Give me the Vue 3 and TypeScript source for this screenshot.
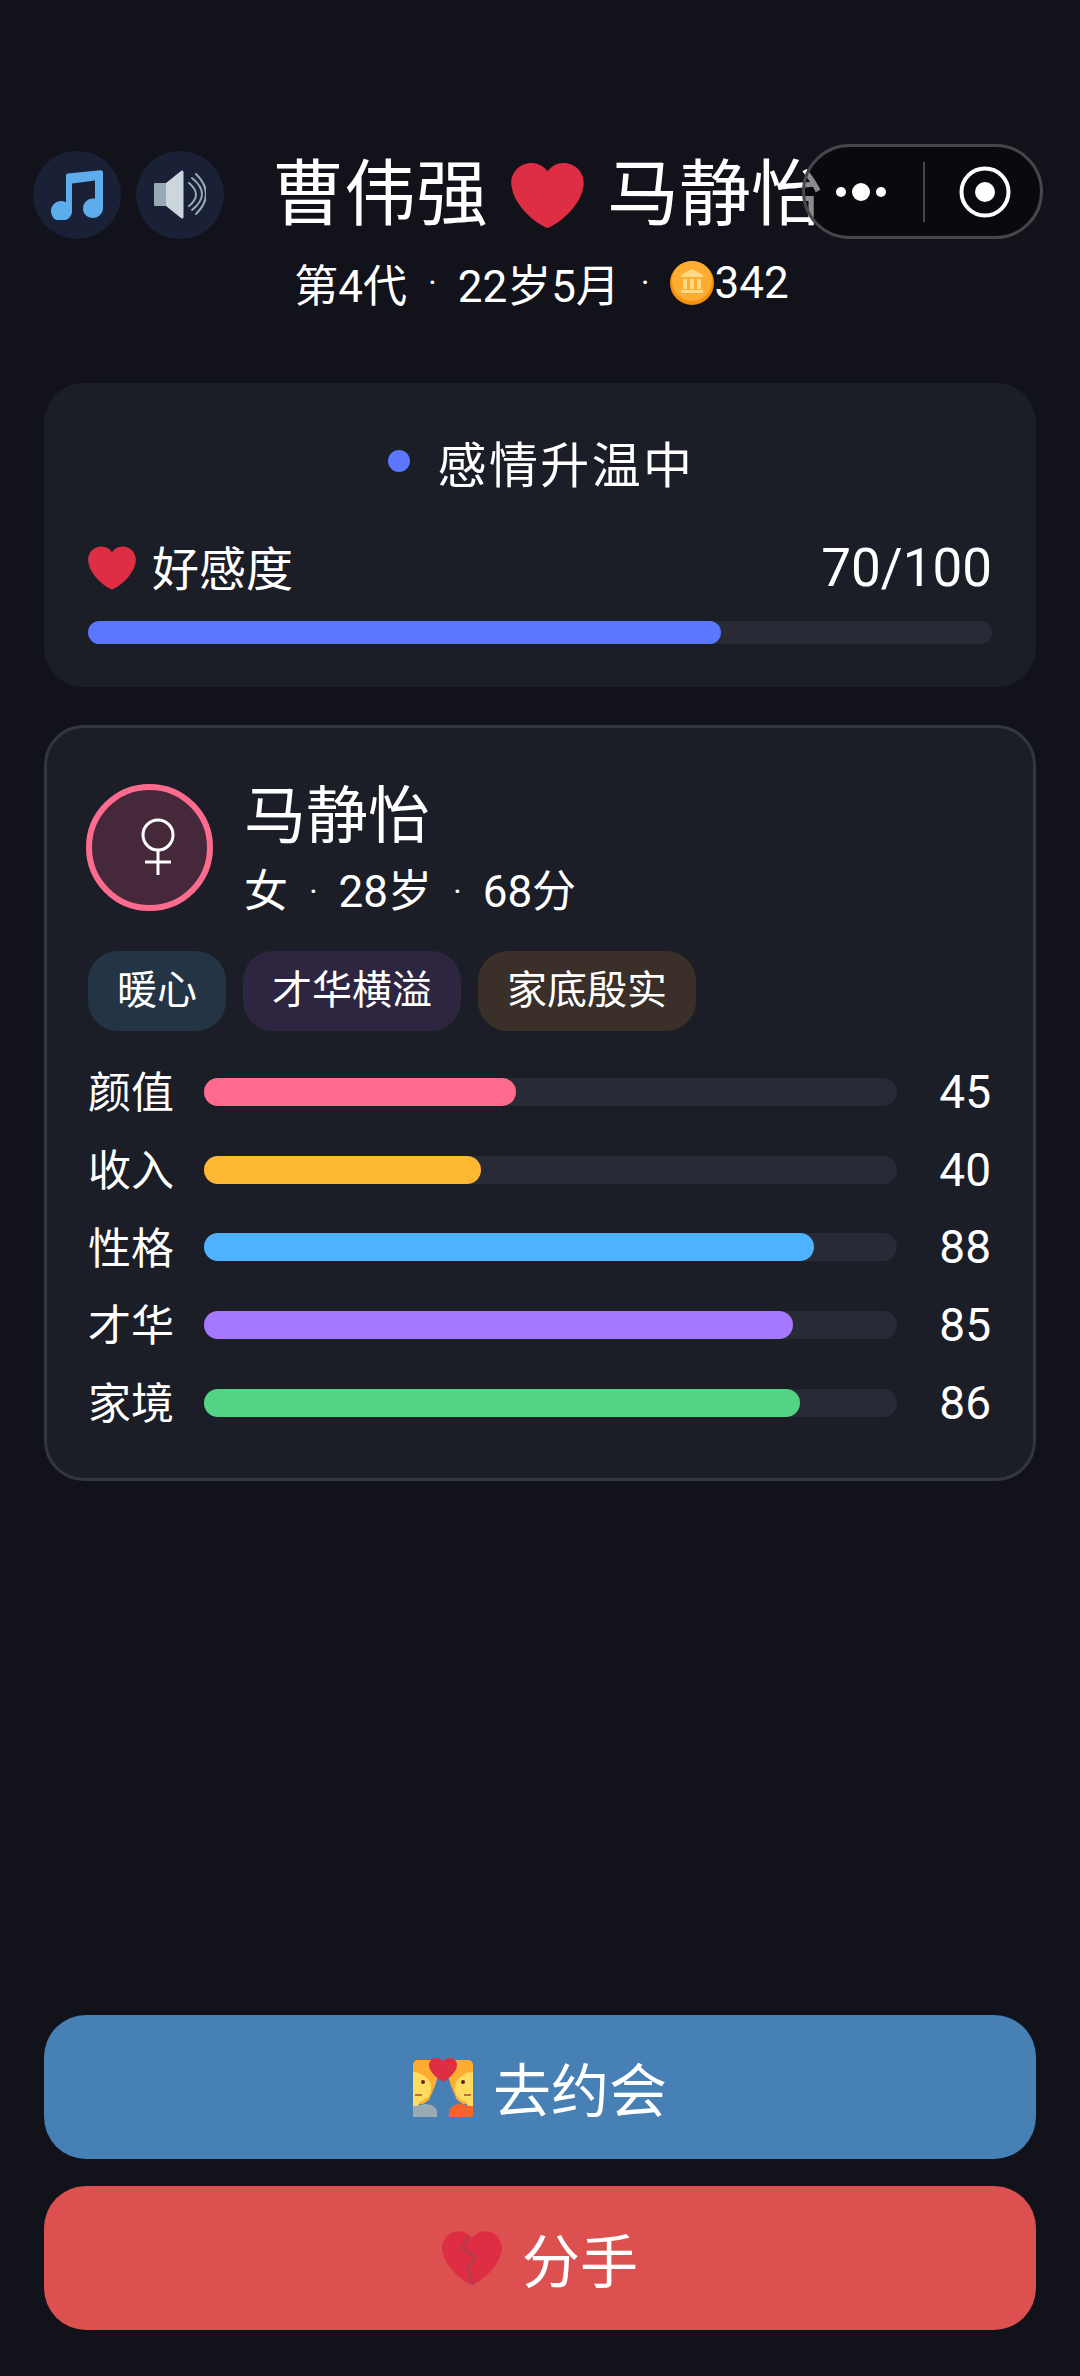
<template>
  <div class="page">
    <div class="capsule">
      <svg class="capsule-dots" viewBox="0 0 60 20"><circle cx="9" cy="10" r="5" fill="#fff" /><circle cx="29" cy="10" r="9" fill="#fff" /><circle cx="49" cy="10" r="5" fill="#fff" /></svg>
      <span class="capsule-line"></span>
      <svg class="capsule-target" viewBox="0 0 54 54"><circle cx="27" cy="27" r="23.5" fill="none" stroke="#fff" stroke-width="4" /><circle cx="27" cy="27" r="10" fill="#fff" /></svg>
    </div>

    <header class="header">
      <div class="title-row">
        <button class="round-btn">
          <svg class="music" viewBox="0 0 54 50"><path fill="#5dadec" d="M16 5.500c0-1 .8-1.800 1.800-1.900L50.500.2C52 0 53 1 53 2.500V38c0 5.500-4.500 10-10 10s-10-4-10-9.500 4.500-10 10-10c.7 0 1.400.1 2 .2V10.500l-23 3V41c0 5.500-4.500 10-11 10S1 46.500 1 41s4.500-10 10-10c1.700 0 3.500.4 5 1.200z" /></svg>
        </button>
        <button class="round-btn">
          <svg class="speaker" viewBox="0 0 52 50">
            <path fill="#99aab5" d="M1 13h12v23H1a1 1 0 0 1-1-1V14a1 1 0 0 1 1-1z" />
            <path fill="#ccd6dd" d="M12 13 27 1c1-1 2.500-.5 2.500 1v45c0 1.500-1.500 2-2.500 1L12 36z" />
            <path fill="none" stroke="#99aab5" stroke-width="2" stroke-linecap="round" d="M35 13q14 11.500 0 23M38 8q20 16 0 32M42 4q20 20 0 40" />
          </svg>
        </button>
        <h1 class="title">
          <span>曹伟强</span>
          <svg class="title-heart" viewBox="0 0 36 36"><path fill="#dd2e44" :d="heartPath" /></svg>
          <span>马静怡</span>
        </h1>
      </div>
      <div class="meta">
        <span>第4代</span><span class="sep">·</span><span>22岁5月</span><span class="sep">·</span>
        <svg class="coin" viewBox="0 0 44 44">
          <circle cx="22" cy="22" r="22" fill="#f4900c" />
          <circle cx="22" cy="20" r="20" fill="#ffac33" />
          <path fill="#ffd983" d="M22 8 33 14v2H11v-2zM13 18h4v10h-4zM20 18h4v10h-4zM27 18h4v10h-4zM11 29h22v3H11z" />
        </svg>
        <span>342</span>
      </div>
    </header>

    <section class="card love">
      <div class="status">
        <span class="status-dot"></span>
        <span>感情升温中</span>
      </div>
      <div class="love-row">
        <div class="love-label">
          <svg class="love-heart" viewBox="0 0 36 36"><path fill="#dd2e44" :d="heartPath" /></svg>
          <span class="love-text">好感度</span>
        </div>
        <span class="love-value">70/100</span>
      </div>
      <div class="love-track"><div class="love-fill" :style="{ width: '70%' }"></div></div>
    </section>

    <section class="card person">
      <div class="person-head">
        <div class="avatar">
          <svg class="venus" viewBox="0 0 36 58"><circle cx="18" cy="17" r="15" fill="none" stroke="#fff" stroke-width="3" /><path fill="none" stroke="#fff" stroke-width="3" d="M18 32v25M5 44h26" /></svg>
        </div>
        <div class="person-info">
          <div class="person-name">马静怡</div>
          <div class="person-sub">女<span class="sep">·</span>28岁<span class="sep">·</span>68分</div>
        </div>
      </div>
      <div class="tags">
        <span v-for="tag in tags" :key="tag.text" class="tag" :style="{ background: tag.bg }">{{ tag.text }}</span>
      </div>
      <div class="stats">
        <div v-for="s in stats" :key="s.label" class="stat">
          <span class="stat-label">{{ s.label }}</span>
          <div class="stat-track"><div class="stat-fill" :style="{ width: s.value + '%', background: s.color }"></div></div>
          <span class="stat-value">{{ s.value }}</span>
        </div>
      </div>
    </section>

    <div class="actions">
      <button class="action date">
        <svg class="action-icon" viewBox="0 0 60 60">
          <path fill="#ffac33" d="M0 8c0-3 2-5 5-5h13l8 12-4 14-6 14-6 4H0z" />
          <path fill="#ffac33" d="M60 8c0-3-2-5-5-5H42l-8 12 4 14 6 14 6 4h10z" />
          <path fill="#ffdc5d" d="M0 15c5 0 13 3 17 10 2 5 1 10-1 14-3 4-8 6-10 6v6H0z" />
          <path fill="#ffdc5d" d="M60 15c-5 0-13 3-17 10-2 5-1 10 1 14 3 4 8 6 10 6v6h6z" />
          <circle cx="10" cy="25" r="2" fill="#662113" /><circle cx="50" cy="25" r="2" fill="#662113" />
          <path fill="#c1694f" d="M2 37h7v2H2zM51 37h7v2h-7z" />
          <path fill="#99aab5" d="M0 60V49c5 0 10-2 12-2 8 0 12 4 12 8v5z" />
          <path fill="#f4642c" d="M60 60V49c-5 0-10-2-12-2-8 0-12 4-12 8v5z" />
          <path fill="#dd2e44" d="M30 25c-4-3-14-9-14-17 0-4 3-7 7-7 3 0 5 1 7 3 2-2 4-3 7-3 4 0 7 3 7 7 0 8-10 14-14 17z" />
        </svg>
        <span>去约会</span>
      </button>
      <button class="action leave">
        <svg class="action-icon" viewBox="0 0 36 36">
          <path fill="#dd2e44" :d="heartPath" />
          <path fill="none" stroke="#b93a4c" stroke-width="2" stroke-linejoin="round" d="M16 5 12 12l8 5-5 8 4 9" />
        </svg>
        <span>分手</span>
      </button>
    </div>
  </div>
</template>

<script setup lang="ts">
const heartPath =
  'M35.885 11.833c0-5.45-4.418-9.868-9.867-9.868-3.308 0-6.227 1.633-8.018 4.129-1.791-2.496-4.71-4.129-8.017-4.129-5.45 0-9.868 4.417-9.868 9.868 0 .772.098 1.52.266 2.241C1.751 22.587 11.216 31.568 18 34.034c6.783-2.466 16.249-11.447 17.617-19.959.17-.721.268-1.469.268-2.242z'

const tags = [
  { text: '暖心', bg: '#233444' },
  { text: '才华横溢', bg: '#2e2640' },
  { text: '家底殷实', bg: '#3a3029' }
]

const stats = [
  { label: '颜值', value: 45, color: '#ff6b8f' },
  { label: '收入', value: 40, color: '#ffb833' },
  { label: '性格', value: 88, color: '#4db2ff' },
  { label: '才华', value: 85, color: '#a678ff' },
  { label: '家境', value: 86, color: '#52d484' }
]
</script>

<style>
html,
body {
  margin: 0;
  background: #12121a;
}
</style>

<style scoped>
.page {
  position: relative;
  display: flex;
  flex-direction: column;
  height: 2376px;
  box-sizing: border-box;
  padding: 151px 44px 46px;
  background: #12121a;
  color: #fff;
  font-family: Roboto, "Noto Sans CJK SC", sans-serif;
  overflow: hidden;
}

.capsule {
  position: absolute;
  top: 144px;
  left: 802px;
  z-index: 5;
  width: 241px;
  height: 95px;
  box-sizing: border-box;
  border: 3px solid #47474b;
  border-radius: 48px;
  background: rgba(0, 0, 0, 0.45);
}
.capsule-dots {
  position: absolute;
  left: 27px;
  top: 35px;
  width: 60px;
  height: 20px;
}
.capsule-line {
  position: absolute;
  left: 118px;
  top: 15px;
  width: 2px;
  height: 60px;
  background: #47474b;
}
.capsule-target {
  position: absolute;
  left: 153px;
  top: 18px;
  width: 54px;
  height: 54px;
}

.header {
  margin-left: -11px;
}
.title-row {
  display: flex;
  align-items: center;
  gap: 15px;
}
.round-btn {
  display: flex;
  align-items: center;
  justify-content: center;
  width: 88px;
  height: 88px;
  padding: 0;
  border: 0;
  border-radius: 50%;
  background: #1a2035;
}
.music {
  width: 54px;
  height: 50px;
}
.speaker {
  width: 52px;
  height: 50px;
}
.title {
  display: flex;
  align-items: center;
  gap: 23px;
  margin: 0 0 0 33px;
  font-size: 72px;
  font-weight: 400;
  line-height: 88px;
  white-space: nowrap;
}
.title-heart {
  width: 73px;
  height: 73px;
}
.meta {
  display: flex;
  align-items: center;
  justify-content: center;
  margin: 14px 0 0 14px;
  height: 60px;
  font-size: 44px;
  white-space: nowrap;
}
.sep {
  display: inline-block;
  width: 1.15em;
  font-weight: 300;
  text-align: center;
}
.coin {
  width: 44px;
  height: 44px;
}

.card {
  box-sizing: border-box;
  width: 992px;
  border-radius: 40px;
  background: #1c1e27;
}

.love {
  height: 304px;
  margin-top: 70px;
  padding: 41px 44px 0;
}
.status {
  display: flex;
  align-items: center;
  justify-content: center;
  gap: 27px;
  height: 74px;
  padding-left: 3px;
  font-size: 49px;
  letter-spacing: 2.4px;
}
.status-dot {
  width: 22px;
  height: 22px;
  border-radius: 50%;
  background: #5b76ff;
}
.love-row {
  display: flex;
  align-items: center;
  justify-content: space-between;
  height: 62px;
  margin-top: 39px;
  font-size: 47px;
}
.love-label {
  display: flex;
  align-items: center;
  gap: 16px;
}
.love-heart {
  width: 48px;
  height: 48px;
}
.love-text {
  margin-top: -6px;
}
.love-value {
  font-size: 53px;
}
.love-track {
  height: 23px;
  margin-top: 22px;
  border-radius: 12px;
  background: #282a36;
}
.love-fill {
  height: 100%;
  border-radius: 12px;
  background: #5b76ff;
}

.person {
  height: 756px;
  margin-top: 38px;
  padding: 46px 42px 0 41px;
  border: 3px solid #33353f;
}
.person-head {
  display: flex;
  align-items: center;
  gap: 31px;
}
.avatar {
  display: flex;
  align-items: center;
  justify-content: center;
  box-sizing: border-box;
  width: 127px;
  height: 127px;
  margin-left: -2px;
  border: 6px solid #ff6b8f;
  border-radius: 50%;
  background: #45293a;
}
.venus {
  width: 36px;
  height: 58px;
  margin-left: 16px;
}
.person-name {
  margin-top: 4px;
  font-size: 62px;
  line-height: 78px;
}
.person-sub {
  margin-top: 8px;
  font-size: 44px;
  line-height: 56px;
}
.tags {
  display: flex;
  gap: 17px;
  margin-top: 31px;
}
.tag {
  height: 80px;
  padding: 0 29px;
  border-radius: 30px;
  font-size: 40px;
  line-height: 80px;
}
.stats {
  display: flex;
  flex-direction: column;
  margin-top: 22px;
}
.stat {
  display: flex;
  align-items: center;
  height: 77.7px;
}
.stat-label {
  width: 116px;
  flex-shrink: 0;
  margin-top: -5px;
  font-size: 43px;
}
.stat-track {
  flex: 1;
  height: 28px;
  border-radius: 14px;
  background: #282a36;
}
.stat-fill {
  height: 100%;
  border-radius: 14px;
}
.stat-value {
  width: 94px;
  flex-shrink: 0;
  font-size: 46px;
  text-align: right;
}

.actions {
  display: flex;
  flex-direction: column;
  gap: 27px;
  margin-top: auto;
}
.action {
  display: flex;
  align-items: center;
  justify-content: center;
  gap: 20px;
  width: 992px;
  height: 144px;
  padding: 0;
  border: 0;
  border-radius: 42px;
  color: #fff;
  font-family: inherit;
  font-size: 58px;
}
.date {
  background: #4680b5;
}
.leave {
  background: #dd5050;
}
.action-icon {
  width: 60px;
  height: 60px;
}
</style>
